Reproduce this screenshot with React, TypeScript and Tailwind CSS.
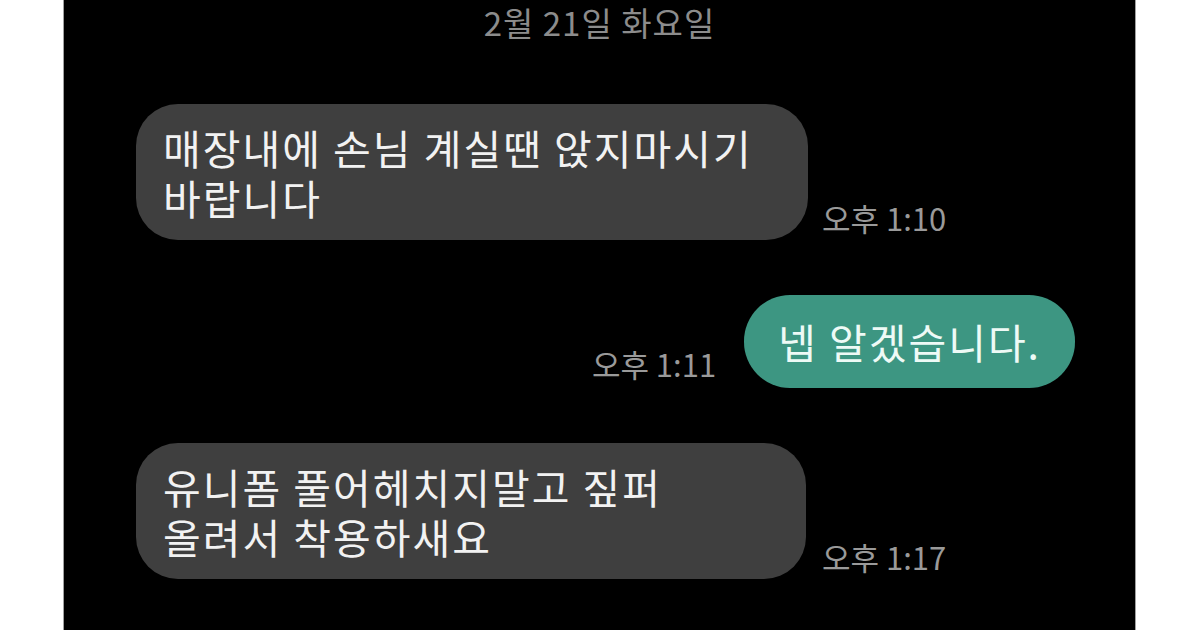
import React from "react";

const font = { fontFamily: '"Noto Sans CJK KR", "Noto Sans", sans-serif' };

const Time = ({ children, className = "" }: { children: React.ReactNode; className?: string }) => (
  <span className={`whitespace-nowrap text-[31px] leading-[36px] text-[#9a9a9a] ${className}`}>{children}</span>
);

export default function App() {
  return (
    <div className="flex h-[630px] w-[1200px] bg-white" style={font}>
      <div className="w-[64px] border-r border-[#a0a0a0]" />

      {/* chat area */}
      <div className="flex w-[1071px] flex-col bg-black">
        <div className="pt-[2px] text-center text-[33px] leading-[40px] tracking-[1px] text-[#8c8c8c]">2월 21일 화요일</div>

        {/* received */}
        <div className="mt-[62px] flex items-end pl-[72px]">
          <div className="w-[672px] rounded-[42px] bg-[#3f3f3f] px-[27px] py-[18px] text-[41px] leading-[50px] tracking-[2px] text-[#f2f2f2]">
            매장내에 손님 계실땐 앉지마시기
            <br />
            바랍니다
          </div>
          <Time className="mb-[4px] ml-[14px]">오후 1:10</Time>
        </div>

        {/* sent */}
        <div className="mt-[55px] flex items-end justify-end pr-[60px]">
          <Time className="mb-[6px] mr-[28px]">오후 1:11</Time>
          <div className="rounded-[46px] bg-[#3d9682] px-[34px] py-[21px] text-[41px] leading-[51px] tracking-[2px] text-[#eefaf6]">
            넵 알겠습니다.
          </div>
        </div>

        {/* received */}
        <div className="mt-[55px] flex items-end pl-[72px]">
          <div className="w-[670px] rounded-[42px] bg-[#3f3f3f] px-[27px] py-[18px] text-[41px] leading-[50px] tracking-[2px] text-[#f2f2f2]">
            유니폼 풀어헤치지말고 짚퍼
            <br />
            올려서 착용하새요
          </div>
          <Time className="mb-[4px] ml-[16px]">오후 1:17</Time>
        </div>
      </div>

      <div className="flex-1 border-l border-[#a0a0a0]" />
    </div>
  );
}
